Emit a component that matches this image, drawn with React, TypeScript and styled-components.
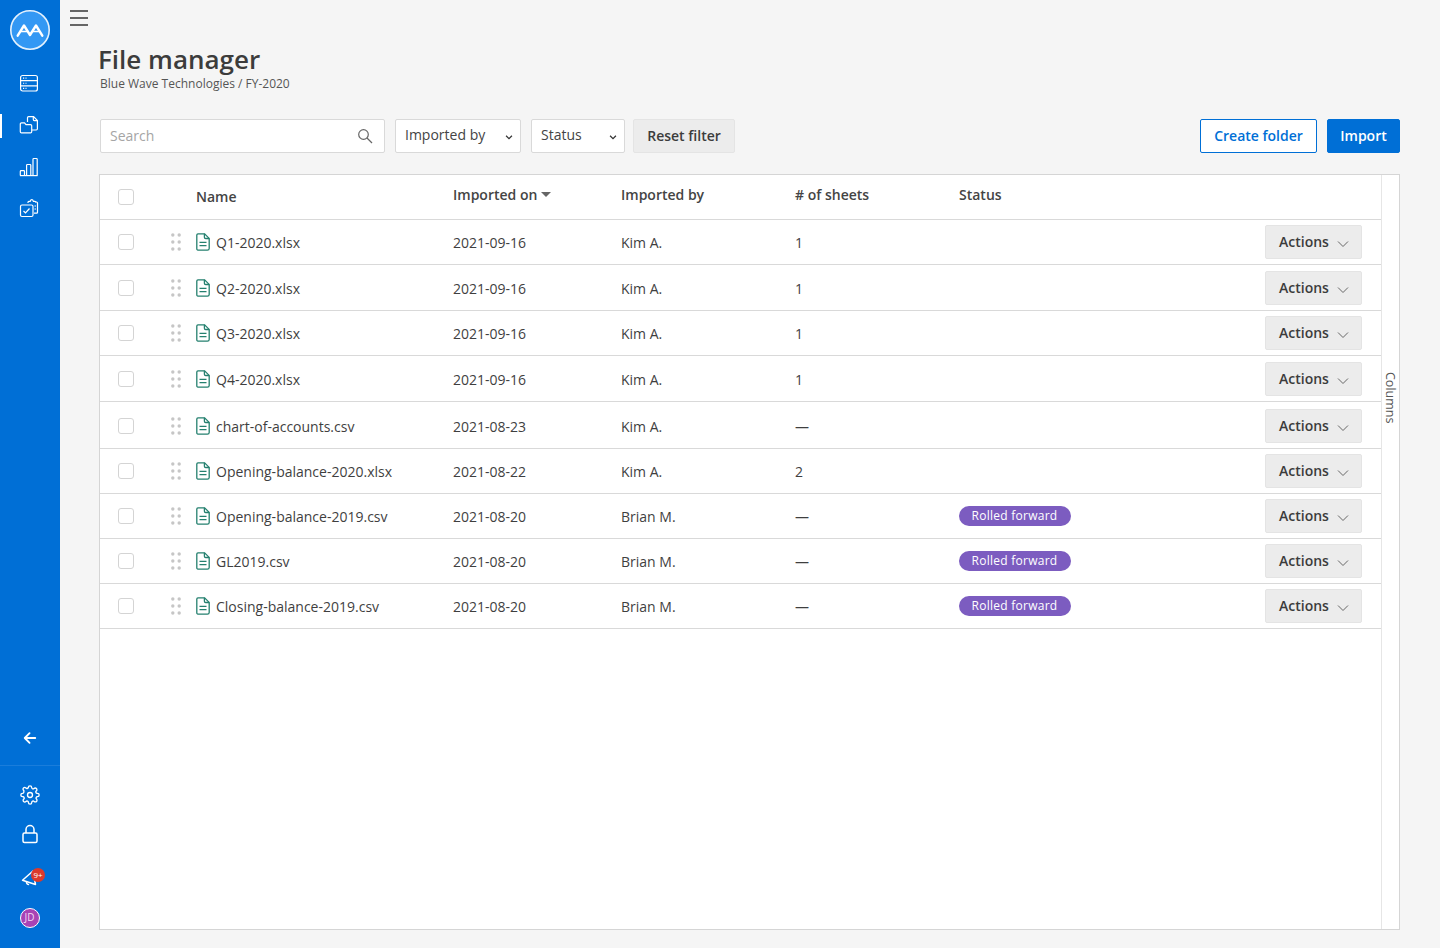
import React from 'react';
import styled, { createGlobalStyle } from 'styled-components';

const GlobalStyle = createGlobalStyle`
  html, body {
    margin: 0;
    padding: 0;
    background: #f5f5f5;
    color: #3c3c3c;
    font-family: "Open Sans", "Liberation Sans", sans-serif;
  }
  * { box-sizing: border-box; }
`;

type FileRow = {
  name: string;
  date: string;
  by: string;
  sheets: string;
  rolled?: boolean;
  height: number;
};

const FILES: FileRow[] = [
  { name: 'Q1-2020.xlsx', date: '2021-09-16', by: 'Kim A.', sheets: '1', height: 45 },
  { name: 'Q2-2020.xlsx', date: '2021-09-16', by: 'Kim A.', sheets: '1', height: 46 },
  { name: 'Q3-2020.xlsx', date: '2021-09-16', by: 'Kim A.', sheets: '1', height: 45 },
  { name: 'Q4-2020.xlsx', date: '2021-09-16', by: 'Kim A.', sheets: '1', height: 46 },
  { name: 'chart-of-accounts.csv', date: '2021-08-23', by: 'Kim A.', sheets: '—', height: 47 },
  { name: 'Opening-balance-2020.xlsx', date: '2021-08-22', by: 'Kim A.', sheets: '2', height: 45 },
  { name: 'Opening-balance-2019.csv', date: '2021-08-20', by: 'Brian M.', sheets: '—', rolled: true, height: 45 },
  { name: 'GL2019.csv', date: '2021-08-20', by: 'Brian M.', sheets: '—', rolled: true, height: 45 },
  { name: 'Closing-balance-2019.csv', date: '2021-08-20', by: 'Brian M.', sheets: '—', rolled: true, height: 45 },
];

const Chevron = ({ size = 12, strong = false }: { size?: number; strong?: boolean }) => (
  <svg width={size} height={size} viewBox="0 0 12 12" fill="none" stroke={strong ? '#333' : '#666'} strokeWidth={strong ? 1.5 : 1}>
    <path d={strong ? 'M2.5 4.5 6 8l3.5-3.5' : 'M1 3.5 6 8.5l5-5'} />
  </svg>
);

const FileIcon = () => (
  <svg width="14" height="18" viewBox="0 0 14 18" fill="none" stroke="#25806f" strokeWidth="1.3">
    <path d="M2 .8h6.6l4.6 4.6V15.4a1.8 1.8 0 0 1-1.8 1.8H2A1.4 1.4 0 0 1 .8 15.6V2A1.3 1.3 0 0 1 2 .8Z" />
    <path d="M8.4 .8v3.4c0 .8.5 1.3 1.3 1.3h3.5" />
    <path d="M3.5 9.4h7M3.5 12.6h7" />
  </svg>
);

const DragHandle = () => (
  <svg width="10" height="18" viewBox="0 0 10 18" fill="#c6c6c6">
    {[2, 9, 16].map((y) => (
      <React.Fragment key={y}>
        <circle cx="1.8" cy={y} r="1.7" />
        <circle cx="8.2" cy={y} r="1.7" />
      </React.Fragment>
    ))}
  </svg>
);

const Logo = () => (
  <svg width="42" height="42" viewBox="0 0 42 42">
    <circle cx="21" cy="21" r="19.2" fill="#3398f4" stroke="#e4f1fd" strokeWidth="1.6" />
    <path d="M8.700 26.700 15 16.500l6 9.500 6-9.500 6.300 10.200" fill="none" stroke="#fff" strokeWidth="2.400" strokeLinecap="round" strokeLinejoin="round" />
    <path d="M11.800 22.500h6.200M24 22.500h6.200" fill="none" stroke="#fff" strokeWidth="1.500" />
  </svg>
);

const ServerIcon = () => (
  <svg width="20" height="20" viewBox="0 0 20 20" fill="none" stroke="#fff" strokeWidth="1.2">
    <rect x="1.600" y="2.500" width="16.800" height="15.500" rx="2" />
    <path d="M1.600 7.600h16.800M1.600 12.800h16.800" />
    <path d="M4 5.100h1.200M6.500 5.100h1M4 10.200h1.200M6.500 10.200h1M4 15.400h1.200M6.500 15.400h1" strokeWidth="1.100" />
  </svg>
);

const FilesIcon = () => (
  <svg width="20" height="20" viewBox="0 0 20 20" fill="none" stroke="#fff" strokeWidth="1.2">
    <path d="M8.500 7V2.800c0-.6.500-1.100 1.100-1.100h5l3.800 3.800v8.300c0 .7-.5 1.200-1.200 1.200H13" />
    <path d="M14.300 1.800v2.800c0 .6.400 1 1 1h3" />
    <path d="M1.300 9c0-.7.500-1.200 1.200-1.200h3l1.500 1.800h4.500c.7 0 1.200.5 1.200 1.200v5.900c0 .7-.5 1.200-1.200 1.200H2.500c-.7 0-1.200-.5-1.200-1.200V9Z" />
  </svg>
);

const BarsIcon = () => (
  <svg width="20" height="20" viewBox="0 0 20 20" fill="none" stroke="#fff" strokeWidth="1.2" strokeLinejoin="round">
    <path d="M1.300 18.600V14.500c0-.5.300-.8.800-.8h2.600c.5 0 .8.300.8.800v4.100" />
    <path d="M7.600 18.600V8.300c0-.5.300-.8.800-.8h2.600c.5 0 .8.300.8.800v10.300" />
    <path d="M14 18.600V2.300c0-.5.300-.8.800-.8h2.600c.5 0 .8.300.8.800v16.300" />
    <path d="M1 18.600h17.600" />
  </svg>
);

const ClipboardIcon = () => (
  <svg width="20" height="20" viewBox="0 1 20 20" fill="none" stroke="#fff" strokeWidth="1.2">
    <path d="M9 5V4.200c0-.5.400-.9.900-.9h1.300c.3-1 .9-1.600 1.600-1.600s1.300.6 1.600 1.600h1.500c.5 0 .9.400.9.900" />
    <path d="M16 4h1.600c.5 0 .9.400.9.900v9.300c0 .5-.4.900-.9.900H15" />
    <rect x="1.500" y="7" width="12.500" height="11.500" rx="1.500" />
    <path d="M4.500 13l2 2 4-4.500M15.500 8h1.500M15.500 11h1.500" />
  </svg>
);

const BackIcon = () => (
  <svg width="14" height="14" viewBox="0 0 16 16" fill="none" stroke="#fff" strokeWidth="2.100" strokeLinecap="round" strokeLinejoin="round">
    <path d="M14 8H2.500M7.500 2.500 2 8l5.500 5.500" />
  </svg>
);

const GearIcon = () => (
  <svg width="20" height="20" viewBox="0 0 24 24" fill="none" stroke="#fff" strokeWidth="1.600" strokeLinecap="round" strokeLinejoin="round">
    <circle cx="12" cy="12" r="3" />
    <path d="M19.400 15a1.650 1.650 0 0 0 .33 1.820l.06.060a2 2 0 1 1-2.830 2.830l-.06-.06a1.650 1.650 0 0 0-2.800 1.170V21a2 2 0 0 1-4 0v-.09a1.650 1.650 0 0 0-2.880-1.120l-.06.060a2 2 0 1 1-2.830-2.830l.06-.06A1.650 1.650 0 0 0 3.090 14H3a2 2 0 0 1 0-4h.09A1.650 1.650 0 0 0 4.600 8.200a1.650 1.650 0 0 0-.33-1.820l-.06-.06a2 2 0 1 1 2.830-2.830l.06.060A1.650 1.650 0 0 0 10 3.090V3a2 2 0 0 1 4 0v.09a1.650 1.650 0 0 0 2.800 1.120l.06-.06a2 2 0 1 1 2.830 2.830l-.06.060A1.650 1.650 0 0 0 20.910 10H21a2 2 0 0 1 0 4h-.09a1.650 1.650 0 0 0-1.510 1Z" />
  </svg>
);

const LockIcon = () => (
  <svg width="18" height="20" viewBox="0 0 18 20" fill="none" stroke="#fff" strokeWidth="1.500">
    <rect x="2" y="9" width="14" height="9.500" rx="1.500" />
    <path d="M5 9V5.500a4 4 0 0 1 8 0V9" />
  </svg>
);

const BellIcon = () => (
  <svg width="20" height="20" viewBox="0 0 20 20" fill="none" stroke="#fff" strokeWidth="1.500" strokeLinejoin="round">
    <path d="M2.500 12.300 13 3l2.500 13.500-13-4.200Z" />
    <path d="M6.500 13.700c-.2 1.700.8 2.700 2.600 2.800" />
  </svg>
);

const SearchIcon = () => (
  <svg width="16" height="16" viewBox="0 0 16 16" fill="none" stroke="#666" strokeWidth="1.200">
    <circle cx="6.500" cy="6.500" r="4.800" />
    <path d="m10 10 5 5" />
  </svg>
);

const App: React.FC = () => (
  <S.Page>
    <GlobalStyle />
    <S.Sidebar>
      <S.LogoSlot>
        <Logo />
      </S.LogoSlot>
      <S.NavGroup>
        <S.NavItem><ServerIcon /></S.NavItem>
        <S.NavItem $active><FilesIcon /></S.NavItem>
        <S.NavItem><BarsIcon /></S.NavItem>
        <S.NavItem><ClipboardIcon /></S.NavItem>
      </S.NavGroup>
      <S.BackSlot>
        <BackIcon />
      </S.BackSlot>
      <S.BottomGroup>
        <S.BottomItem><GearIcon /></S.BottomItem>
        <S.BottomItem $nudge={-1}><LockIcon /></S.BottomItem>
        <S.BottomItem $nudge={4}>
          <BellIcon />
          <S.NotifyBadge>9+</S.NotifyBadge>
        </S.BottomItem>
        <S.BottomItem>
          <S.Avatar>JD</S.Avatar>
        </S.BottomItem>
      </S.BottomGroup>
    </S.Sidebar>

    <S.Main>
      <S.Hamburger>
        <span />
        <span />
        <span />
      </S.Hamburger>
      <S.Title>File manager</S.Title>
      <S.Breadcrumb>Blue Wave Technologies / FY-2020</S.Breadcrumb>

      <S.Toolbar>
        <S.Filters>
          <S.SearchBox>
            <S.SearchHint>Search</S.SearchHint>
            <SearchIcon />
          </S.SearchBox>
          <S.Select $width={126}>
            Imported by
            <Chevron size={10} strong />
          </S.Select>
          <S.Select $width={94}>
            Status
            <Chevron size={10} strong />
          </S.Select>
          <S.GreyButton>Reset filter</S.GreyButton>
        </S.Filters>
        <S.Actions>
          <S.OutlineButton>Create folder</S.OutlineButton>
          <S.PrimaryButton>Import</S.PrimaryButton>
        </S.Actions>
      </S.Toolbar>

      <S.Panel>
        <S.TableArea>
          <S.HeaderRow>
            <S.CheckCell><S.Checkbox /></S.CheckCell>
            <span />
            <S.NameHead>Name</S.NameHead>
            <S.HeadCell>
              Imported on
              <S.SortCaret />
            </S.HeadCell>
            <S.HeadCell>Imported by</S.HeadCell>
            <S.HeadCell># of sheets</S.HeadCell>
            <S.HeadCell>Status</S.HeadCell>
          </S.HeaderRow>
          {FILES.map((file) => (
            <S.Row key={file.name} $height={file.height}>
              <S.CheckCell><S.Checkbox /></S.CheckCell>
              <S.HandleCell><DragHandle /></S.HandleCell>
              <S.NameCell>
                <FileIcon />
                {file.name}
              </S.NameCell>
              <S.Cell>{file.date}</S.Cell>
              <S.Cell>{file.by}</S.Cell>
              <S.Cell>{file.sheets}</S.Cell>
              <S.Cell>{file.rolled && <S.Pill>Rolled forward</S.Pill>}</S.Cell>
              <S.ActionCell>
                <S.ActionButton>
                  Actions
                  <Chevron />
                </S.ActionButton>
              </S.ActionCell>
            </S.Row>
          ))}
        </S.TableArea>
        <S.ColumnsRail>
          <S.ColumnsLabel>Columns</S.ColumnsLabel>
        </S.ColumnsRail>
      </S.Panel>
    </S.Main>
  </S.Page>
);

const COLUMNS = '71px 25px 257px 168px 174px 164px 1fr auto';

const S = {
  Page: styled.div`
    display: flex;
    height: 948px;
    overflow: hidden;
    background: #f5f5f5;
  `,
  Sidebar: styled.aside`
    flex: 0 0 60px;
    display: flex;
    flex-direction: column;
    background: #006fd6;
  `,
  LogoSlot: styled.div`
    display: flex;
    justify-content: center;
    padding-top: 9px;
    height: 62px;
  `,
  NavGroup: styled.nav`
    display: flex;
    flex-direction: column;
  `,
  NavItem: styled.div<{ $active?: boolean }>`
    display: flex;
    align-items: center;
    justify-content: center;
    height: 42px;
    border-left: 2px solid transparent;
    padding-right: 4px;
    position: relative;
    &::before {
      content: '';
      display: ${(p) => (p.$active ? 'block' : 'none')};
      position: absolute;
      left: -2px;
      top: 10px;
      width: 2px;
      height: 24px;
      background: #fff;
    }
  `,
  BackSlot: styled.div`
    margin-top: auto;
    display: flex;
    justify-content: center;
    align-items: center;
    height: 56px;
    border-bottom: 1px solid #1a7ddb;
  `,
  BottomGroup: styled.div`
    display: flex;
    flex-direction: column;
    padding: 9px 0 10px;
  `,
  BottomItem: styled.div<{ $nudge?: number }>`
    position: relative;
    display: flex;
    align-items: center;
    justify-content: center;
    height: 40px;
    padding-right: 1px;
    margin-top: ${(p) => p.$nudge ?? 0}px;
  `,
  NotifyBadge: styled.span`
    position: absolute;
    left: 31px;
    top: 10px;
    width: 14px;
    height: 14px;
    border-radius: 50%;
    background: #dc3a2c;
    color: #fff;
    font-size: 8px;
    line-height: 13px;
    text-align: center;
  `,
  Avatar: styled.span`
    width: 20px;
    height: 20px;
    border-radius: 50%;
    background: #a843b5;
    border: 1px solid #fff;
    color: #f3dcf6;
    font-size: 10px;
    line-height: 17px;
    text-align: center;
  `,
  Main: styled.main`
    flex: 1;
    min-width: 0;
    display: flex;
    flex-direction: column;
    padding: 10px 40px 18px 10px;
  `,
  Hamburger: styled.div`
    display: flex;
    flex-direction: column;
    justify-content: space-between;
    width: 18px;
    height: 16px;
    span {
      display: block;
      height: 2px;
      background: #666;
    }
  `,
  Title: styled.h1`
    margin: 16px 0 0 28px;
    font-size: 26px;
    line-height: 34px;
    font-weight: 600;
    color: #3c3c3c;
  `,
  Breadcrumb: styled.div`
    margin: 0 0 0 30px;
    font-size: 12px;
    line-height: 16px;
    color: #555;
  `,
  Toolbar: styled.div`
    display: flex;
    justify-content: space-between;
    margin: 27px 0 21px 30px;
  `,
  Filters: styled.div`
    display: flex;
    gap: 10px;
  `,
  SearchBox: styled.div`
    display: flex;
    align-items: center;
    justify-content: space-between;
    width: 285px;
    height: 34px;
    padding: 0 11px 0 9px;
    background: #fff;
    border: 1px solid #d9d9d9;
    border-radius: 2px;
  `,
  SearchHint: styled.span`
    font-size: 14px;
    color: #a5a5a5;
    margin-bottom: 1px;
  `,
  Select: styled.div<{ $width: number }>`
    display: flex;
    align-items: center;
    justify-content: space-between;
    width: ${(p) => p.$width}px;
    height: 34px;
    padding: 0 6px 3px 9px;
    background: #fff;
    border: 1px solid #d9d9d9;
    border-radius: 2px;
    font-size: 14px;
    color: #444;
    svg {
      margin-top: 5px;
    }
  `,
  GreyButton: styled.button`
    width: 102px;
    height: 34px;
    margin-left: -2px;
    padding: 0 0 2px;
    background: #ececec;
    border: 1px solid #e4e4e4;
    border-radius: 2px;
    font: 600 14px "Open Sans", sans-serif;
    color: #3c3c3c;
  `,
  Actions: styled.div`
    display: flex;
    gap: 10px;
  `,
  OutlineButton: styled.button`
    width: 117px;
    height: 34px;
    padding: 0 0 2px;
    background: #fff;
    border: 1px solid #006fd6;
    border-radius: 2px;
    font: 600 14px "Open Sans", sans-serif;
    color: #006fd6;
  `,
  PrimaryButton: styled.button`
    width: 73px;
    height: 34px;
    padding: 0 0 2px;
    background: #006fd6;
    border: 1px solid #006fd6;
    border-radius: 2px;
    font: 600 14px "Open Sans", sans-serif;
    color: #fff;
  `,
  Panel: styled.section`
    flex: 1;
    display: flex;
    margin-left: 29px;
    background: #fff;
    border: 1px solid #d5d5d5;
  `,
  TableArea: styled.div`
    flex: 1;
    min-width: 0;
  `,
  HeaderRow: styled.div`
    display: grid;
    grid-template-columns: ${COLUMNS};
    align-items: center;
    height: 45px;
    border-bottom: 1px solid #d9d9d9;
  `,
  Row: styled.div<{ $height: number }>`
    display: grid;
    grid-template-columns: ${COLUMNS};
    align-items: center;
    height: ${(p) => p.$height}px;
    padding-top: ${(p) => p.$height - 45}px;
    border-bottom: 1px solid #d9d9d9;
  `,
  CheckCell: styled.div`
    display: flex;
    padding-left: 18px;
  `,
  Checkbox: styled.span`
    display: block;
    width: 16px;
    height: 16px;
    background: #fff;
    border: 1px solid #d4d4d4;
    border-radius: 3px;
  `,
  HandleCell: styled.div`
    display: flex;
    align-items: center;
  `,
  NameHead: styled.div`
    font-size: 14px;
    font-weight: 600;
    color: #444;
    margin-bottom: 2px;
  `,
  HeadCell: styled.div`
    display: flex;
    align-items: center;
    font-size: 14px;
    font-weight: 600;
    color: #444;
    margin-top: -6px;
  `,
  SortCaret: styled.span`
    width: 0;
    height: 0;
    margin-left: 4px;
    border-left: 5px solid transparent;
    border-right: 5px solid transparent;
    border-top: 5px solid #666;
  `,
  NameCell: styled.div`
    display: flex;
    align-items: center;
    gap: 6px;
    font-size: 14px;
    color: #3f3f3f;
    svg {
      margin-bottom: 1px;
    }
  `,
  Cell: styled.div`
    font-size: 14px;
    color: #3f3f3f;
  `,
  Pill: styled.span`
    display: inline-block;
    height: 20px;
    padding: 0 14px 0 12.500px;
    margin-top: -2px;
    vertical-align: middle;
    border-radius: 10px;
    background: #7c5cc0;
    color: #fff;
    font-size: 12px;
    letter-spacing: .26px;
    line-height: 19px;
  `,
  ActionCell: styled.div`
    display: flex;
    padding-right: 19px;
  `,
  ActionButton: styled.button`
    display: flex;
    align-items: center;
    justify-content: space-between;
    width: 97px;
    height: 34px;
    padding: 0 12px 2px 13px;
    background: #ececec;
    border: 1px solid #e4e4e4;
    border-radius: 2px;
    font: 600 14px "Open Sans", sans-serif;
    color: #3c3c3c;
    svg {
      margin-top: 6px;
    }
  `,
  ColumnsRail: styled.div`
    flex: 0 0 18px;
    position: relative;
    border-left: 1px solid #e6e6e6;
  `,
  ColumnsLabel: styled.span`
    position: absolute;
    left: 1px;
    top: 197px;
    writing-mode: vertical-rl;
    font-size: 12.500px;
    line-height: 14px;
    color: #555;
  `,
};

export default App;
